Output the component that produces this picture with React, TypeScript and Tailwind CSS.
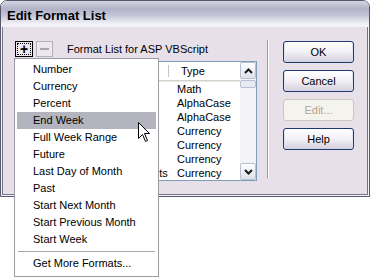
import React from "react";

const menuItems = [
  "Number",
  "Currency",
  "Percent",
  "End Week",
  "Full Week Range",
  "Future",
  "Last Day of Month",
  "Past",
  "Start Next Month",
  "Start Previous Month",
  "Start Week",
];

const rows = [
  ["Math - Rounded", "Math"],
  ["Upper Case", "AlphaCase"],
  ["Lower Case", "AlphaCase"],
  ["Currency - Default", "Currency"],
  ["Currency - Leading 0", "Currency"],
  ["Currency - Negative", "Currency"],
  ["Currency - Two Decimal Digits", "Currency"],
];

function Chevron({ up }: { up: boolean }) {
  return (
    <svg width="9" height="6" viewBox="0 0 9 6">
      <polyline
        points={up ? "1,5 4.5,1.5 8,5" : "1,1 4.5,4.5 8,1"}
        fill="none"
        stroke="#1a1a1a"
        strokeWidth="2"
      />
    </svg>
  );
}

function Btn({ label, disabled }: { label: string; disabled?: boolean }) {
  return disabled ? (
    <div className="w-[71px] h-[22px] rounded-[3px] border border-[#c9c7c0] bg-[#f4f3ee] flex items-center justify-center text-[#aca899]">
      {label}
    </div>
  ) : (
    <div className="w-[71px] h-[22px] rounded-[3px] border border-[#1c3a6e] bg-linear-to-b from-white via-[#f2f0f6] to-[#d4d0de] shadow-[inset_1px_0_0_#dfe4f4,inset_-1px_0_0_#dfe4f4] flex items-center justify-center text-black">
      {label}
    </div>
  );
}

export default function App() {
  return (
    <div className="relative w-[372px] h-[277px] bg-white overflow-hidden font-['Liberation_Sans',Arial,sans-serif] text-[11px] text-black">
      {/* Window */}
      <div className="w-[370px] h-[197px] flex flex-col border border-[#58586c] rounded-t-[7px] overflow-hidden">
        <div className="h-[26px] shrink-0 flex items-center pl-[6px] pt-[3px] bg-[linear-gradient(to_bottom,#d4d4e2_0%,#b2b2c8_30%,#c4c4d6_55%,#eeeef4_85%,#f6f4f8_100%)]">
          <span className="text-[13px] font-bold text-black leading-none">Edit Format List</span>
        </div>
        <div className="flex-1 px-px pb-px bg-[#f6f4f8]">
          <div className="h-full flex border-x border-b border-[#74748a] bg-[#e7e0e9] pl-[12px] pt-[14px]">
            {/* Left column */}
            <div className="w-[242px] flex flex-col">
              <div className="h-[16px] flex items-center">
                <div className="w-[18px] h-[16px] border border-black bg-[#ece8ee] p-px">
                  <div className="w-full h-full border border-dotted border-black flex items-center justify-center">
                    <span className="text-[14px] font-bold leading-none mt-[-1px]">+</span>
                  </div>
                </div>
                <div className="ml-[3px] w-[17px] h-[16px] border border-[#b4b0bc] bg-[#ece8ee] flex items-center justify-center">
                  <div className="w-[9px] h-[2px] bg-[#a8a4b0]" />
                </div>
                <span className="ml-[14px] whitespace-nowrap">Format List for ASP VBScript</span>
              </div>
              <div className="mt-[4px] h-[120px] border border-[#7f9db9] bg-white flex">
                <div className="flex-1 flex flex-col">
                  <div className="h-[19px] flex items-center border-b border-[#d4d2cc] shadow-[0_1px_0_#ebeae4]">
                    <div className="w-[153px] h-[12px] border-r border-[#c8c6c0]" />
                    <div className="w-px h-[12px] bg-white" />
                    <span className="pl-[11px]">Type</span>
                  </div>
                  <div className="pt-px flex flex-col">
                    {rows.map(([n, t], i) => (
                      <div key={i} className="h-[14px] flex items-center">
                        <div className="w-[153px] pl-[4px] overflow-hidden whitespace-nowrap">{n}</div>
                        <div className="pl-[8px]">{t}</div>
                      </div>
                    ))}
                  </div>
                </div>
                <div className="w-[16px] bg-[#f3f2f6] flex flex-col">
                  <div className="h-[17px] rounded-[2px] border border-[#b7c0d2] bg-linear-to-b from-white to-[#dfe2ec] flex items-center justify-center">
                    <Chevron up />
                  </div>
                  <div className="h-[8px] mt-px rounded-[2px] border border-[#b7c0d2] bg-[#e9ebf2]" />
                  <div className="flex-1" />
                  <div className="h-[17px] rounded-[2px] border border-[#b7c0d2] bg-linear-to-b from-white to-[#dfe2ec] flex items-center justify-center">
                    <Chevron up={false} />
                  </div>
                </div>
              </div>
            </div>
            {/* Separator */}
            <div className="ml-[10px] mt-[-1px] w-[2px] h-[138px] border-l border-[#9e9aa6] border-r border-r-white" />
            {/* Buttons */}
            <div className="ml-[14px] flex flex-col gap-[7px]">
              <Btn label="OK" />
              <Btn label="Cancel" />
              <Btn label="Edit..." disabled />
              <Btn label="Help" />
            </div>
          </div>
        </div>
      </div>

      {/* Dropdown menu */}
      <div className="absolute left-[14px] top-[58px] w-[145px] h-[219px] bg-white border border-[#9d9ca4] pt-[2px] flex flex-col">
        {menuItems.map((m) => (
          <div
            key={m}
            className={
              m === "End Week"
                ? "mx-[2px] h-[17px] pl-[16px] flex items-center bg-[#b4b4be] whitespace-nowrap"
                : "mx-[2px] h-[17px] pl-[16px] flex items-center whitespace-nowrap"
            }
          >
            {m}
          </div>
        ))}
        <div className="mx-[3px] my-[3px] h-px bg-[#a6a6ac]" />
        <div className="mx-[2px] h-[17px] pl-[16px] flex items-center whitespace-nowrap">Get More Formats...</div>
      </div>

      {/* Mouse cursor */}
      <svg className="absolute left-[138px] top-[122px]" width="13" height="21" viewBox="0 0 13 21">
        <polygon
          points="0.5,0.5 0.5,16.5 4.5,12.5 7.5,19.5 9.5,18.5 6.5,11.5 11.5,11.5"
          fill="white"
          stroke="black"
          strokeWidth="1"
        />
      </svg>
    </div>
  );
}
